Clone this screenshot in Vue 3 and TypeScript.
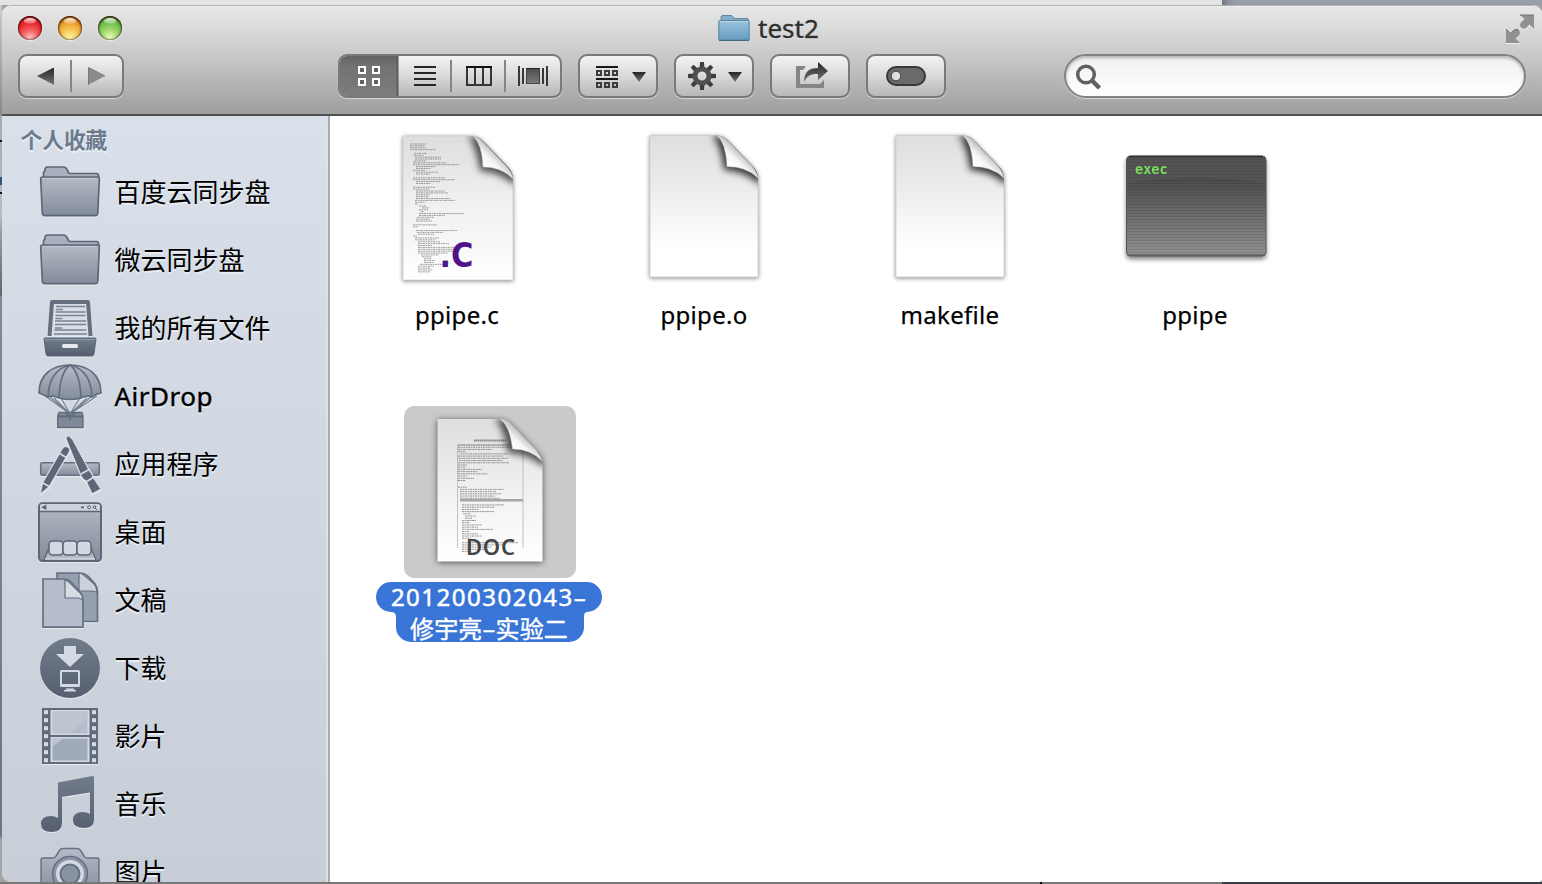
<script setup lang="ts">
interface SidebarItem {
  label: string
  icon: string
}

type CodeLine = [indent: number, length: number]

const favourites: SidebarItem[] = [
  { label: '百度云同步盘', icon: 'folder' },
  { label: '微云同步盘', icon: 'folder' },
  { label: '我的所有文件', icon: 'allfiles' },
  { label: 'AirDrop', icon: 'airdrop' },
  { label: '应用程序', icon: 'apps' },
  { label: '桌面', icon: 'desktop' },
  { label: '文稿', icon: 'documents' },
  { label: '下载', icon: 'downloads' },
  { label: '影片', icon: 'movies' },
  { label: '音乐', icon: 'music' },
  { label: '图片', icon: 'pictures' },
]

const files = [
  { name: 'ppipe.c', kind: 'source' },
  { name: 'ppipe.o', kind: 'blank' },
  { name: 'makefile', kind: 'blank' },
  { name: 'ppipe', kind: 'exec' },
]

const sourceLines: CodeLine[] = [
  [0, 16], [0, 15], [0, 16], [0, 26], [0, 0], [4, 13], [4, 10], [5, 26], [5, 26], [4, 12], [3, 34], [3, 46], [6, 20],
  [6, 15], [3, 12], [6, 22], [6, 15], [0, 0], [3, 32], [3, 42], [6, 24], [6, 15], [0, 0], [3, 22], [3, 16], [6, 29],
  [6, 32], [6, 14], [6, 13], [6, 34], [5, 40], [5, 10], [5, 3], [9, 7], [12, 7], [9, 9], [11, 3], [9, 45], [9, 26],
  [7, 17], [6, 14], [6, 16], [0, 0], [3, 24], [3, 5], [0, 0], [6, 41], [7, 26], [8, 16], [3, 4], [5, 24], [5, 20],
  [8, 22], [8, 31], [8, 14], [8, 36], [8, 36], [8, 35], [8, 30], [11, 18], [12, 10], [14, 8], [14, 11], [14, 10],
  [10, 24], [8, 16], [8, 13], [8, 15], [8, 12],
]

const documentLines: CodeLine[] = [
  [0, 62], [0, 60], [0, 34], [0, 8], [2, 48], [0, 45], [0, 50], [1, 44], [0, 51], [0, 9], [0, 8], [0, 24], [0, 20],
  [0, 30], [0, 9], [0, 16], [0, 8], [0, 0], [0, 0], [0, 9], [2, 44], [2, 36], [2, 41], [2, 35], [2, 40], [2, 12],
  [0, 0], [4, 42], [4, 33], [4, 16], [4, 32], [5, 8], [7, 11], [7, 7], [4, 14], [4, 8], [4, 20], [4, 16], [4, 31],
  [4, 8], [4, 16], [4, 20], [4, 9], [0, 0], [4, 56], [4, 42], [4, 30], [4, 25], [4, 9],
]

function linePath(lines: CodeLine[], x: number, y: number, step: number): string {
  return lines
    .map(([indent, length], i) =>
      length ? `M${x + indent} ${(y + i * step).toFixed(2)}h${length}` : '',
    )
    .join('')
}

const sourcePath = linePath(sourceLines, 11, 9, 1.88)
const documentPath = linePath(documentLines, 57, 39, 2.22)
const sprockets = Array.from({ length: 7 }, (_, i) => 5.2 + i * 8)
const scanlines = Array.from({ length: 33 }, (_, i) => 3 + i * 3)
</script>

<template>
  <div class="screen">
    <div class="behind-top"></div>
    <div class="behind-side"><i class="mark m1"></i><i class="mark m2"></i><i class="mark m3"></i></div>

    <main class="window">
      <header class="toolbar">
        <div class="titlebar">
          <div class="lights">
            <i class="light red"></i><i class="light amber"></i><i class="light green"></i>
          </div>
          <h1 class="title">
            <svg width="32" height="28" viewBox="0 0 32 28">
              <path d="M3 7V3.2Q3 1.500 5 1.500h8q1.500 0 2 1.500l.7 1.500H29q1.500 0 1.500 2V9H3z" fill="#84aeca" stroke="#6186a0" />
              <rect x=".8" y="6.500" width="30.400" height="20" rx="1" fill="url(#blueFolder)" stroke="#55819f" />
              <path d="M2 7.500h28" stroke="#b8d7e8" />
              <path d="M1 26.300h30" stroke="#42677f" />
            </svg>
            <span>test2</span>
          </h1>
          <svg class="fullscreen" width="30" height="30" viewBox="0 0 30 30">
            <path d="M15 1h14v14l-4.500-4.500-3.500 3.500q-3 1.500-5-.5t0-5l3.500-3.500zM1 15l4.500 4.500 3.500-3.500q3-1.500 5 .5t0 5L10.500 24.500 15 29H1z" fill="#919191" />
            <path d="M15 1h14M1 15l4.500 4.500 3.500-3.500q3-1.500 5 .5" fill="none" stroke="#707070" />
          </svg>
        </div>

        <div class="tools">
          <div class="button nav">
            <svg width="101" height="40" viewBox="0 0 101 40">
              <path d="M17 20 34 11.500V29z" fill="url(#ink)" />
              <path d="M51 4v32" stroke="#858585" stroke-width="2" />
              <path d="M68 11.500 85 20 68 29z" fill="#8b8b8b" /><path d="M68.500 29V11.500L85 20" fill="none" stroke="#777" />
            </svg>
          </div>
          <div class="button views">
            <svg width="220" height="40" viewBox="0 0 220 40">
              <rect width="58" height="40" fill="url(#pressed)" />
              <path d="M57.500 0v40" stroke="#5b5b5b" stroke-width="2" />
              <g fill="#606060" stroke="#fff" stroke-width="2">
                <rect x="19" y="11" width="6" height="6" /><rect x="33" y="11" width="6" height="6" />
                <rect x="19" y="23" width="6" height="6" /><rect x="33" y="23" width="6" height="6" />
              </g>
              <path d="M74 11h22M74 17h22M74 23h22M74 29h22" stroke="#262626" stroke-width="2" />
              <path d="M111 4v32M165 4v32" stroke="#858585" stroke-width="2" />
              <path d="M127 11h24v18h-24zM135 11v18M143 11v18" fill="none" stroke="#353535" stroke-width="2" />
              <path d="M126 11h26" stroke="#111" stroke-width="2" />
              <path d="M179 10v20M183 12v16M203 12v16M207 10v20" stroke="#383838" stroke-width="2" />
              <rect x="186.500" y="12.500" width="13" height="15" fill="url(#cover)" stroke="#444" />
              <path d="M186 12.500h14" stroke="#222" />
            </svg>
          </div>
          <div class="button">
            <svg width="76" height="40" viewBox="0 0 76 40">
              <path d="M16 11h22M16 23h22" stroke="#181818" stroke-width="2" />
              <g fill="none" stroke="#3c3c3c" stroke-width="2">
                <path d="M17 15h4v4h-4zM25 15h4v4h-4zM33 15h4v4h-4zM17 27h4v4h-4zM25 27h4v4h-4zM33 27h4v4h-4z" />
              </g>
              <path d="M52 16h14l-7 10z" fill="url(#ink)" />
            </svg>
          </div>
          <div class="button">
            <svg width="76" height="40" viewBox="0 0 76 40">
              <g transform="translate(26 20)">
                <g fill="#3d3d3d">
                  <path v-for="n in 8" :key="n" :transform="`rotate(${n * 45})`" d="M-2-14h4l.4 6h-4.800z" />
                </g>
                <circle r="7" fill="none" stroke="#505050" stroke-width="5" />
              </g>
              <path d="M52 16h14l-7 10z" fill="url(#ink)" />
            </svg>
          </div>
          <div class="button">
            <svg width="76" height="40" viewBox="0 0 76 40">
              <path d="M34 10H24v22h28v-8l-4 4H28V14h3z" fill="#858585" />
              <path d="M32 26c0-10 5-14 14-14V6l10 9-10 9v-6c-7-.5-11 2-14 8z" fill="url(#ink)" />
            </svg>
          </div>
          <div class="button">
            <svg width="76" height="40" viewBox="0 0 76 40">
              <rect x="19" y="11" width="38" height="18" rx="9" fill="#6a6a6a" stroke="#383838" stroke-width="2" />
              <circle cx="28" cy="20" r="4.800" fill="#dedede" stroke="#404040" />
            </svg>
          </div>
          <div class="search">
            <svg width="28" height="28" viewBox="0 0 28 28">
              <circle cx="11" cy="10.500" r="8.300" fill="none" stroke="#606060" stroke-width="3.500" />
              <path d="m17 16.500 7.500 7.500" stroke="#606060" stroke-width="4.500" />
            </svg>
          </div>
        </div>
      </header>

      <div class="body">
        <aside class="sidebar">
          <h2>个人收藏</h2>
          <ul>
            <li v-for="item in favourites" :key="item.label">
              <svg class="side-icon" width="64" height="64" viewBox="0 0 64 64">
                <g v-if="item.icon === 'folder'" stroke="#5d6778" stroke-width="1.700" stroke-linejoin="round">
                  <path d="M5.500 16.500v-5q1.500-1 1.500-2.500 0-3 2.500-3H25q3 0 4 2.500l1.500 3q.6 1 2 1h26q2 0 2 2.500l.5 2z" fill="#a9b0bd" />
                  <path d="M4.500 16h55q2 0 1.800 2.200L59.800 52q-.2 2.700-2 2.700H6.500q-2 0-2.200-2.700L2.700 18.200Q2.500 16 4.500 16z" fill="url(#steel)" />
                  <path d="M5 17.500h54" stroke="#c7ccd5" stroke-width=".8" />
                </g>
                <g v-else-if="item.icon === 'allfiles'">
                  <path d="M11.500 39 14 5h36l2.500 34" fill="#d9dfe8" stroke="#65707f" stroke-width="4" stroke-linejoin="round" />
                  <path d="M18 9.500h29M18 12.500h7M17.500 15h30M17.500 18.500h30M17.500 21.500h7M17 24h31M17 27.500h31M17 31h7M16.500 33h32M16 37h33" stroke="#7a8593" stroke-width="1.600" />
                  <path d="M7 41h50q1 0 1 1l-2 15q-.4 2-2 2H10q-1.600 0-2-2L6 42q0-1 1-1z" fill="url(#dark)" stroke="#596474" />
                  <path d="M7 42.700h50" stroke="#929cab" />
                  <rect x="24" y="47" width="16" height="4" rx="1.500" fill="#e5e9ef" />
                </g>
                <g v-else-if="item.icon === 'airdrop'" stroke="#616c7e">
                  <path d="m7 31 25 18L59 31M16 33l16 16 17-16M23 33l9 16 10-16M12 32l20 17 21-17" fill="none" stroke="#758091" stroke-width="1.200" />
                  <path d="M32 0C15 0 1 9 1 28q5 2 9 4 5-2 11 1 11 3 22 0 6-3 11-1 4-3 9-4C63 9 49 0 32 0z" fill="url(#steel)" stroke-width="1.700" />
                  <path d="M10 32Q11 5 32 0M21 33Q22 7 32 0 42 7 43 33M54 32Q53 5 32 0" fill="none" stroke-width="1.600" />
                  <path d="M19.700 51 21 47.500h23l1 3.500v11.500H19.700z" fill="#7f8998" stroke-width="1.400" />
                  <path d="M20 51.500h25M28 48l4 4 5-4M32 49v6" fill="none" stroke-width="2" />
                </g>
                <g v-else-if="item.icon === 'apps'">
                  <rect x="2.700" y="29.700" width="58.600" height="12.500" rx="1.500" fill="url(#steel)" stroke="#667184" stroke-width="1.500" />
                  <g stroke="#d9dfe8" stroke-width="1.200" fill="#5d6778">
                    <path d="M24 16q2.500-4 6-2 3 2 1 5.500L11 54 2 61.500 4.500 50z" />
                    <path d="M28 6q0-4 3-3 2 1 4 4l16 30q3 3 4 7l8 12-9 5-6-13q-3-1-5-5z" />
                    <path d="m21 20 8 5M5 50l7 4M43 41l9-5M48 49l8-5" fill="none" stroke-width="1.500" />
                  </g>
                </g>
                <g v-else-if="item.icon === 'desktop'" stroke="#5d6778">
                  <rect x="1" y="2.300" width="62" height="57.700" rx="3.500" fill="url(#steel)" stroke-width="2" />
                  <path d="M2 10V5q0-2 2-2h56q2 0 2 2v5z" fill="#ced4dd" stroke="none" /><path d="M1 10.500h62" stroke-width="1.600" />
                  <path d="M5 6.300 7.500 5v2.600zM43 6.300h3" stroke-width="1.800" /><circle cx="51" cy="6.300" r="1.500" fill="none" /><circle cx="56.500" cy="6" r="1.300" fill="none" /><path d="m57 7 2 2" />
                  <path d="m6 59 5-12h42l5 12z" fill="#b6bdc9" stroke-width="1.300" />
                  <g fill="#d3d9e2" stroke-width="1.500"><rect x="11" y="40" width="14" height="14" rx="3.500" /><rect x="25" y="40" width="14" height="14" rx="3.500" /><rect x="39" y="40" width="14" height="14" rx="3.500" /></g>
                  <path d="M7 58h50" stroke="#d5dbe4" stroke-width="1.500" />
                </g>
                <g v-else-if="item.icon === 'documents'" stroke="#657083" stroke-width="1.700">
                  <path d="M19 4h22q6 0 10 4l6 7q2.500 3 2.500 8v29.500H19z" fill="#969fae" />
                  <path d="M41 4v18h12q5 0 6 2 0-7-5-11l-7-6q-3-3-6-3z" fill="#cbd2dc" stroke-width="1.200" />
                  <path d="M5 10h20q5 0 8 3l9 10q3 4 3 8v27.200H5z" fill="#b5bdca" />
                  <path d="M27 11v18h12q5 0 6 3 0-6-5-10l-8-8q-2-2-5-3z" fill="#d6dce4" stroke-width="1.200" />
                </g>
                <g v-else-if="item.icon === 'downloads'" fill="#d3dae3">
                  <circle cx="32" cy="31" r="30" fill="url(#dark)" />
                  <path d="M26 9h12v8h8L32 30 18 17h8z" />
                  <path fill-rule="evenodd" d="M23.500 33h17q1.500 0 1.500 1.500v14q0 1.500-1.500 1.500h-17q-1.500 0-1.500-1.500v-14q0-1.500 1.500-1.500zM24 35v12h16V35zM28 51.500h8v1.500h2v1.500H26V53h2z" />
                </g>
                <g v-else-if="item.icon === 'movies'">
                  <rect x="4" y="3" width="56" height="56" fill="#606b7c" />
                  <rect x="12.500" y="5" width="39" height="25" fill="#d5dbe4" /><rect x="12.500" y="32" width="39" height="25" fill="#d5dbe4" />
                  <rect x="14.500" y="6.500" width="35" height="22" fill="#b5bdca" /><rect x="14.500" y="33.500" width="35" height="22" fill="#a1aab8" />
                  <path d="M14.500 6.500h35V14l-18 14.500h-17zM14.500 33.500H25l-10.500 8z" fill="#bdc5d1" />
                  <template v-for="y in sprockets" :key="y"><rect x="6" :y="y" width="4" height="4" fill="#d5dbe4" /><rect x="54" :y="y" width="4" height="4" fill="#d5dbe4" /></template>
                </g>
                <path v-else-if="item.icon === 'music'" fill="url(#dark)" d="M20 9.500 54.500 3q1.500-.3 1.500 1.500V47q0 8-10 8-11 0-11-8 0-8 10-8 4 0 7 2V19.500L24 24v26q0 9-10.500 9T3 51q0-8 10-8 4 0 7 2z" />
                <g v-else stroke="#657083" stroke-width="1.500">
                  <path d="M5 17h10q2 0 3-2l3-5q1.500-2.500 4-2.500h14q2.500 0 4 2.500l3 5q1 2 3 2h10q2 0 2 2v34q0 2-2 2H5q-2 0-2-2V19q0-2 2-2z" fill="url(#steel)" />
                  <circle cx="32" cy="33" r="17.500" fill="#8a94a3" /><circle cx="32" cy="33" r="14" fill="#d3d9e2" stroke="none" /><circle cx="32" cy="33" r="9.500" fill="#8993a2" stroke-width="2" />
                </g>
              </svg>
              <span :class="{ latin: item.icon === 'airdrop' }">{{ item.label }}</span>
            </li>
          </ul>
        </aside>

        <section class="content">
          <div class="file-row">
            <figure v-for="file in files" :key="file.name" class="file" :class="file.kind">
              <svg v-if="file.kind === 'source'" width="112" height="152" viewBox="0 0 112 152" class="doc-icon">
                <path class="sheet" d="M1 1h70q6 0 11 6l23 24q6 6 6 13v101H1z" fill="url(#paper)" stroke="#cfcfcf" stroke-width=".7" />
                <path :d="sourcePath" transform="translate(-3)" stroke="#777" stroke-width=".9" stroke-dasharray="2.500 .6 1.300 .5" opacity=".75" />
                <g clip-path="url(#sourceClip)">
                  <path class="curl-shade" d="M66 1q8 10 12 35 18 0 36 15V30L84 2z" fill="#333" opacity=".85" />
                </g>
                <path d="M71 1q9 8 10 31 19 0 30 12-1-6-6-12L82 8q-5-6-11-7z" fill="url(#curl)" stroke="#c4c4c4" stroke-width=".5" />
                <text x="37.500" y="132" textLength="34" lengthAdjust="spacingAndGlyphs" class="c-mark">.C</text>
              </svg>
              <svg v-else-if="file.kind === 'blank'" width="110" height="152" viewBox="0 0 110 152" class="doc-icon">
                <path class="sheet" d="M1 .5h67q6 0 11 5l24 25q6 6 6 12v99.500H1z" fill="url(#blankPaper)" stroke="#cfcfcf" stroke-width=".8" />
                <g clip-path="url(#blankClip)">
                  <path class="curl-shade" d="M63 0q9 10 12 35 18 0 37 15V30L84 2z" fill="#222" opacity=".9" />
                </g>
                <path d="M68 .5q9 8 10 31 19.500 0 31 11.500-1-6-6-12L79 6Q74 1 68 .5z" fill="url(#curl)" stroke="#c4c4c4" stroke-width=".5" />
              </svg>
              <svg v-else width="142" height="152" viewBox="0 0 142 152" class="doc-icon terminal">
                <rect x="1.500" y="21" width="139.500" height="100" rx="4" fill="url(#terminal)" stroke="#555" />
                <path v-for="y in scanlines" :key="y" :d="`M2 ${21.5 + y}h138`" stroke="#222" stroke-opacity=".13" />
                <path d="M2 48Q71 38 140 48V24q0-3-3-3H5q-3 0-3 3z" fill="#888" opacity=".15" />
                <path d="M3 120h136" stroke="#606060" stroke-width="1.500" />
                <path d="M4 21.500h134" stroke="#333" stroke-width="1.500" />
                <text x="10" y="39" class="exec-text">exec</text>
              </svg>
              <figcaption>{{ file.name }}</figcaption>
            </figure>
          </div>

          <figure class="file selected">
            <div class="highlight">
              <svg width="172" height="172" viewBox="0 0 172 172">
                <path class="sheet dark" d="M33.500 13H96q6 0 11 5l26 27q5 5 5.500 11v99.500h-105z" fill="url(#paper)" />
                <path d="M53.500 142V39H119v103" fill="none" stroke="#aaa" stroke-width=".7" />
                <path :d="documentPath" transform="translate(-3)" stroke="#555" stroke-width=".9" stroke-dasharray="2.500 .6 1.300 .5" opacity=".65" />
                <path d="M70 34.500h32" stroke="#888" stroke-width="1.800" stroke-dasharray="1.500 .4" />
                <rect x="56" y="93" width="63" height="2.500" fill="#a6a6a6" /><path d="M57 94h6" stroke="#c39c70" />
                <g clip-path="url(#docClip)">
                  <path class="curl-shade" d="M91 13q9 10 13 34 19 0 38 15V40l-32-28z" fill="#333" opacity=".85" />
                </g>
                <path d="M96 13q10 7 12.500 30 18 0 29.500 12-1-5-6-11l-25-26q-5-5-11-5z" fill="url(#curl)" stroke="#c4c4c4" stroke-width=".5" />
                <text x="62" y="149" textLength="49" class="doc-mark">DOC</text>
              </svg>
            </div>
            <figcaption>
              <svg class="label-shape" width="226" height="60" viewBox="0 0 226 60">
                <path d="M15 0h196a15 15 0 0 1 0 30q-3 0-3 5v10a15 15 0 0 1-15 15H35a15 15 0 0 1-15-15V35q0-5-5-5a15 15 0 0 1 0-30z" fill="#3875d7" />
              </svg>
              <span class="digits">201200302043<b>–</b></span>
              <span class="hanzi">修宇亮–实验二</span>
            </figcaption>
          </figure>
        </section>
      </div>
    </main>
    <div class="behind-bottom"></div>

    <svg class="defs" width="0" height="0">
      <defs>
        <clipPath id="sourceClip"><path d="M1 1h70q6 0 11 6l23 24q6 6 6 13v101H1z" /></clipPath>
        <clipPath id="blankClip"><path d="M1 .5h67q6 0 11 5l24 25q6 6 6 12v99.500H1z" /></clipPath>
        <clipPath id="docClip"><path d="M33.500 13H96q6 0 11 5l26 27q5 5 5.500 11v99.500h-105z" /></clipPath>
        <linearGradient id="ink" x2="0" y2="1"><stop stop-color="#242424" /><stop offset="1" stop-color="#777" /></linearGradient>
        <linearGradient id="cover" x2="0" y2="1"><stop stop-color="#4c4c4c" /><stop offset="1" stop-color="#7c7c7c" /></linearGradient>
        <linearGradient id="pressed" x2="0" y2="1"><stop stop-color="#626262" /><stop offset=".25" stop-color="#727272" /><stop offset="1" stop-color="#7c7c7c" /></linearGradient>
        <linearGradient id="blueFolder" x2="0" y2="1"><stop stop-color="#9bc3dc" /><stop offset="1" stop-color="#659bc0" /></linearGradient>
        <linearGradient id="steel" x2="0" y2="1"><stop stop-color="#b4bac6" /><stop offset="1" stop-color="#838c9a" /></linearGradient>
        <linearGradient id="dark" x2="0" y2="1"><stop stop-color="#717c8b" /><stop offset="1" stop-color="#565f70" /></linearGradient>
        <linearGradient id="paper" x2="0" y2="1"><stop stop-color="#dedede" /><stop offset=".5" stop-color="#f1f1f1" /><stop offset="1" stop-color="#fff" /></linearGradient>
        <linearGradient id="blankPaper" x2="0" y2="1"><stop stop-color="#dedede" /><stop offset=".3" stop-color="#e9e9e9" /><stop offset=".8" stop-color="#fff" /></linearGradient>
        <linearGradient id="curl" x1="0" y1="1" x2=".55" y2=".4"><stop offset=".3" stop-color="#f0f0f0" /><stop offset=".55" stop-color="#fff" /><stop offset=".78" stop-color="#f4f4f4" /><stop offset="1" stop-color="#c4c4c4" /></linearGradient>
        <linearGradient id="terminal" x2="0" y2="1"><stop stop-color="#484848" /><stop offset=".25" stop-color="#4c4c4c" /><stop offset=".6" stop-color="#6d6d6d" /><stop offset="1" stop-color="#939393" /></linearGradient>
      </defs>
    </svg>
  </div>
</template>

<style>
body { margin: 0; overflow: hidden; }
</style>

<style scoped>
.screen {
  width: 1542px; height: 884px; overflow: hidden; box-sizing: border-box;
  display: grid; grid-template: 5px 877px 2px / 2px 1540px;
  background: #a2a2a2;
  font-family: "Noto Sans", "Noto Sans CJK SC", sans-serif; color: #000;
}
.behind-top { grid-column: 1 / 3; background: linear-gradient(90deg, #e4e4e4 1222px, #737783 1222px, #8f93a0 1229px, #989cab 1235px); }
.behind-side { position: relative; background: linear-gradient(#ccc 0, #888 110px, #aaa 111px, #bbb 210px, #999 230px, #666 290px, #858894 292px, #737681 830px, #a4a4a4 835px); }
.mark { position: absolute; left: 0; width: 2px; height: 2px; background: #111; }
.m1 { top: 135px; }
.m2 { top: 172px; height: 8px; background: #31587a; }
.m3 { top: 187px; }
.behind-bottom { grid-column: 1 / 3; background: linear-gradient(90deg, #777 1040px, #000 1040px, #000 1042px, #777 1042px, #777 1222px, #3a3f48 1222px); }
.window { display: flex; flex-direction: column; min-height: 0; overflow: hidden; border-radius: 9px 9px 4px 9px; background: #fff; }
.toolbar {
  box-sizing: border-box; height: 111px; flex: none; border-top: 1px solid #b2b2b2; border-bottom: 2px solid #505153;
  background: linear-gradient(#e7e7e7, #dcdcdc 18%, #c8c8c8 47%, #9e9e9e); border-radius: 9px 9px 0 0;
  box-shadow: inset 0 1px #eee;
}
.titlebar { height: 48px; display: flex; align-items: flex-start; }
.lights { display: flex; gap: 16px; padding: 10px 0 0 16px; width: 700px; box-sizing: border-box; }
.light { width: 24px; height: 24px; border-radius: 50%; box-shadow: inset 0 1px 3px rgba(40, 0, 0, .95), inset 0 0 2px rgba(40, 20, 0, .8), 0 1px 1px rgba(255, 255, 255, .6); position: relative; }
.light::after { content: ""; position: absolute; left: 6px; top: 2px; width: 12px; height: 6px; border-radius: 50%; background: linear-gradient(#fffd, #fff2); }
.red { background: radial-gradient(circle at 50% 92%, #ffc4c4, #f15b5d 35%, #ed282e 60%, #c7262b); }
.amber { background: radial-gradient(circle at 50% 92%, #fff9b0, #f4c351 38%, #e99a2b 65%, #bc711e); }
.green { background: radial-gradient(circle at 50% 92%, #e8ffc2, #9bd466 38%, #6bbd49 65%, #438b2c); }
.title { flex: 1; margin: 0; padding: 8px 0 0 16px; display: flex; gap: 8px; font-weight: 400; font-size: 26px; line-height: 28px; color: #303030; }
.title span { text-shadow: 0 1px #eee; -webkit-text-stroke: .4px #303030; }
.fullscreen { padding: 8px 7px 0 0; filter: drop-shadow(0 1px 0 #eee); }
.tools { display: flex; align-items: flex-start; padding-left: 16px; }
.button {
  box-sizing: border-box; height: 44px; width: 80px; margin-right: 16px; border: 2px solid #7a7a7a; border-radius: 9px; overflow: hidden; flex: none;
  background: linear-gradient(#f3f3f3, #dcdcdc 45%, #b7b7b7); box-shadow: 0 1px 1px #d8d8d8;
}
.button svg { display: block; }
.nav { width: 106px; margin-right: 214px; }
.views { width: 224px; }
.search {
  box-sizing: border-box; margin-left: 102px; width: 462px; height: 44px; border: 2px solid #828282; border-radius: 22px;
  background: linear-gradient(#f0f0f0, #fff); box-shadow: inset 0 2px 3px #b5b5b5, 0 1px 1px #d8d8d8; padding: 8px 0 0 9px;
}
.body { flex: 1; min-height: 0; display: flex; }
.sidebar { width: 328px; box-sizing: border-box; border-right: 2px solid #a8aaad; background: linear-gradient(#dae0e9, #c7ced8); overflow: hidden; flex: none; box-shadow: inset -2px 0 #dde2e9; }
.sidebar h2 { margin: 0; height: 43px; padding: 7px 0 0 18.500px; box-sizing: border-box; font: 700 21.700px/32px "Noto Sans CJK SC", sans-serif; color: #6b7b8d; text-shadow: 0 2px #edf1f6; }
.sidebar ul { list-style: none; margin: 0; padding: 0; }
.sidebar li { height: 68px; display: flex; align-items: center; gap: 12.500px; padding-left: 36px; font-size: 26px; line-height: 36px; }
.sidebar li span { text-shadow: 0 2px #e8ecf2; margin-top: -2px; }
.sidebar li .latin { letter-spacing: .5px; -webkit-text-stroke: .4px #000; }
.side-icon { overflow: visible; flex: none; filter: drop-shadow(0 1.500px 0 #e7ebf0); }
.content { flex: 1; background: #fff; }
.file-row { display: flex; padding: 19px 0 0 4px; }
.file { margin: 0; width: 246px; display: flex; flex-direction: column; align-items: center; }
.doc-icon { overflow: visible; }
.source .doc-icon { margin-left: 2px; }
.blank { padding-left: 2px; width: 244px; }
.exec .doc-icon { margin-left: 2px; }
.sheet { filter: drop-shadow(0 1px 2px #0007); }
.sheet.dark { filter: drop-shadow(0 1px 3px #0009); }
.curl-shade { filter: blur(3.500px); }
.terminal { filter: drop-shadow(0 3px 2px #0007); }
.c-mark { font: 700 33.500px "DejaVu Sans", sans-serif; fill: #4f148a; }
.exec-text { font: 700 13.600px "DejaVu Sans Mono", monospace; fill: #79dc5c; }
.doc-mark { font: 600 22px "Noto Sans", sans-serif; fill: #444; }
figcaption { font-size: 24px; line-height: 32px; letter-spacing: .3px; -webkit-text-stroke: .25px; padding-top: 12px; }
.selected { width: 226px; margin: 75px 0 0 46px; }
.highlight { width: 172px; height: 172px; border-radius: 10px; background: #cacaca; margin-left: 2px; }
.selected figcaption { position: relative; margin-top: 4px; width: 226px; height: 60px; padding: 0; color: #fff; display: flex; flex-direction: column; align-items: center; }
.label-shape { position: absolute; inset: 0; }
.selected span { position: relative; white-space: nowrap; height: 32px; line-height: 29px; }
.digits { letter-spacing: 1.500px; -webkit-text-stroke: .5px; }
.digits b { font-weight: 400; }
.hanzi { font-family: "Noto Sans CJK SC", sans-serif; letter-spacing: .15px; }
.selected .hanzi { height: 28px; line-height: 28px; -webkit-text-stroke: .4px; }
.defs { position: absolute; }
</style>
